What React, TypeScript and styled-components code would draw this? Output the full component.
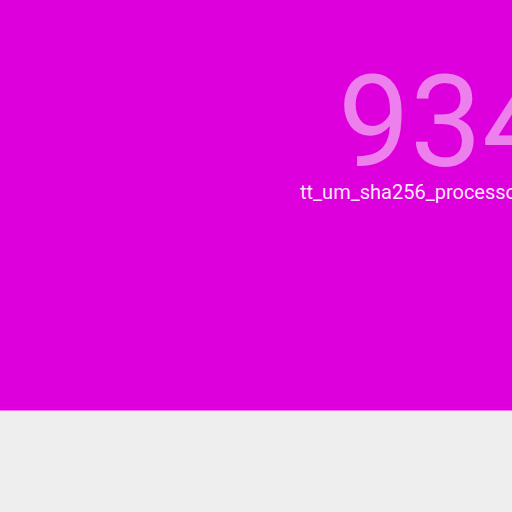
import styled, { createGlobalStyle } from 'styled-components';

const Global = createGlobalStyle`
  html, body {
    margin: 0;
    padding: 0;
    background: #eeeeee;
    font-family: Roboto, 'Liberation Sans', sans-serif;
    overflow: hidden;
  }
`;

const Page = styled.div`
  width: 512px;
  height: 512px;
  overflow: hidden;
`;

const Tile = styled.div`
  height: 411px;
  background: #dd00dd;
  border-bottom: 1px solid #f070f0;
  box-sizing: border-box;
  padding: 58px 0 0 300px;
  display: flex;
  flex-direction: column;
  align-items: flex-start;
  white-space: nowrap;
`;

const Value = styled.div`
  font-size: 128px;
  line-height: 128px;
  color: rgba(255, 255, 255, 0.5);
  margin-left: 38px;
  font-weight: 400;
`;

const Label = styled.div`
  font-size: 20px;
  line-height: 24px;
  color: rgba(255, 255, 255, 0.92);
  margin-top: -6px;
`;

export default function App() {
  return (
    <Page>
      <Global />
      <Tile>
        <Value>9347</Value>
        <Label>tt_um_sha256_processor</Label>
      </Tile>
    </Page>
  );
}
